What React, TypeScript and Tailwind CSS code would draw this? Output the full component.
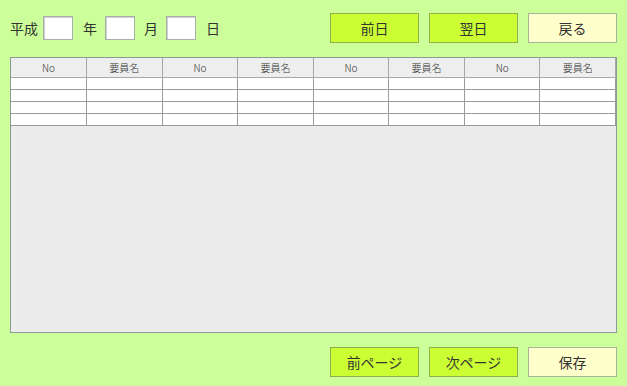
const FONT = '"Noto Sans CJK JP", "Liberation Sans", sans-serif';

const headers = ['No', '要員名', 'No', '要員名', 'No', '要員名', 'No', '要員名'];
const rows = [0, 1, 2, 3];

function DateBox() {
  return (
    <div className="w-[30px] h-[24px] bg-white border border-[#a8b0a8] shadow-[inset_1px_1px_0_#d0d0d0]" />
  );
}

function Btn({ label, tone }: { label: string; tone: 'lime' | 'cream' }) {
  const cls =
    tone === 'lime'
      ? 'bg-[#ccff33] border-[#8fb04a]'
      : 'bg-[#ffffcc] border-[#a9b59a]';
  return (
    <button className={`w-[89px] h-[30px] border text-[14px] text-[#333] flex items-center justify-center ${cls}`}>
      {label}
    </button>
  );
}

export default function App() {
  return (
    <div
      className="w-[627px] h-[386px] bg-[#ccff99] flex flex-col pt-[13px] text-[#333]"
      style={{ fontFamily: FONT }}
    >
      {/* 日付・ナビ */}
      <div className="h-[30px] flex items-center justify-between pl-[10px] pr-[10px]">
        <div className="flex items-center text-[14px]">
          <span className="mr-[5px]">平成</span>
          <DateBox />
          <span className="ml-[10px] mr-[8px]">年</span>
          <DateBox />
          <span className="ml-[9px] mr-[8px]">月</span>
          <DateBox />
          <span className="ml-[10px]">日</span>
        </div>
        <div className="flex gap-[10px]">
          <Btn label="前日" tone="lime" />
          <Btn label="翌日" tone="lime" />
          <Btn label="戻る" tone="cream" />
        </div>
      </div>

      {/* 一覧 */}
      <div className="mx-[10px] mt-[14px] h-[276px] bg-[#ececec] border border-[#8c9a9a] overflow-hidden">
        <table className="w-full table-fixed border-collapse text-[10px]">
          <thead>
            <tr className="h-[19px]">
              {headers.map((h, i) => (
                <th
                  key={i}
                  className="font-light bg-[#eeeeee] border-r border-b border-[#a8a8a8] p-0 text-[#333]"
                >
                  {h}
                </th>
              ))}
            </tr>
          </thead>
          <tbody>
            {rows.map((r) => (
              <tr key={r} className="h-[12px]">
                {headers.map((_, i) => (
                  <td key={i} className="bg-white border-r border-b border-[#9a9a9a] p-0" />
                ))}
              </tr>
            ))}
          </tbody>
        </table>
      </div>

      {/* ページ操作 */}
      <div className="mt-[14px] flex justify-end gap-[10px] pr-[10px]">
        <Btn label="前ページ" tone="lime" />
        <Btn label="次ページ" tone="lime" />
        <Btn label="保存" tone="cream" />
      </div>
    </div>
  );
}
